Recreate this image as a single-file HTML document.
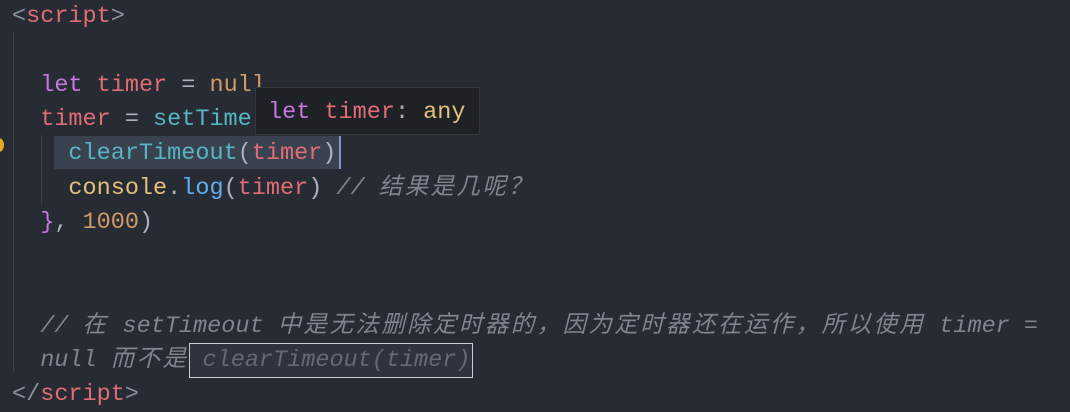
<!DOCTYPE html>
<html><head><meta charset="utf-8"><style>
body{margin:0;width:1070px;height:408px;background:#272b33;overflow:hidden;position:relative;font-family:"Liberation Mono","Noto Sans CJK SC",monospace;font-size:23.5px;}
.l{position:absolute;left:12px;height:34px;line-height:34px;white-space:pre;color:#abb2bf}
.k{color:#c678dd}.v{color:#e06c75}.f{color:#56b6c2}.n{color:#d19a66}.y{color:#e5c07b}.b{color:#61afef}
.c{color:#7f848e;font-style:italic}
.w{letter-spacing:2.4px}
.g{position:absolute;width:1px;background:#3b3f47}
</style></head><body>
<div class="g" style="left:13px;top:32px;height:340px"></div>
<div class="g" style="left:41px;top:135px;height:70px"></div>
<div style="position:absolute;left:54px;top:136px;width:286px;height:33px;background:#3a4250"></div>
<div style="position:absolute;left:339px;top:136px;width:2px;height:33px;background:#8891d8"></div>
<div class="l" style="top:0px"><span style="color:#8b929e">&lt;</span><span class="v">script</span><span style="color:#8b929e">&gt;</span></div>
<div class="l" style="top:69px">  <span class="k">let</span> <span class="v">timer</span> = <span class="n">null</span></div>
<div class="l" style="top:103px">  <span class="v">timer</span> = <span class="f">setTime</span></div>
<div class="l" style="top:137px">    <span class="f">clearTimeout</span>(<span class="v">timer</span>)</div>
<div class="l" style="top:172px">    <span class="y">console</span>.<span class="b">log</span>(<span class="v">timer</span>) <span class="c">// <span class="w">结果是几呢？</span></span></div>
<div class="l" style="top:206px">  <span class="k">}</span>, <span class="n">1000</span>)</div>
<div class="l c" style="top:310px">  // <span class="w">在</span> setTimeout <span class="w">中是无法删除定时器的，因为定时器还在运作，所以使用</span> timer =</div>
<div class="l c" style="top:344px">  null <span class="w">而不是</span> clearTimeout(timer)</div>
<div style="position:absolute;left:189px;top:343px;width:282px;height:33px;border:1px solid #c8ccd2;background:rgba(60,66,78,.4)"></div>
<div class="l" style="top:378px"><span style="color:#8b929e">&lt;/</span><span class="v">script</span><span style="color:#8b929e">&gt;</span></div>
<div style="position:absolute;left:255px;top:87px;width:225px;height:48px;background:#1e2126;border:1px solid #33373e;box-sizing:border-box"></div>
<div class="l" style="top:96px;left:268px"><span class="k">let</span> <span class="v">timer</span>: <span class="y">any</span></div>
<div style="position:absolute;left:-6px;top:138px;width:10px;height:14px;border-radius:50%;background:#e5a823"></div>
</body></html>
